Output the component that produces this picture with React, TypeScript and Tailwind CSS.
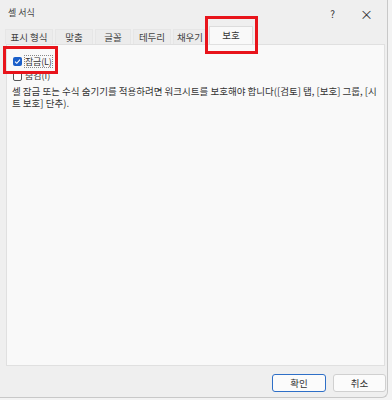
import React from "react";

const font = { fontFamily: '"Noto Sans CJK KR", "Noto Sans", sans-serif' };

function Tab({ label, w, selected }: { label: string; w: string; selected?: boolean }) {
  if (selected) {
    return (
      <div className={`${w} h-[18px] -mb-px relative z-10 flex items-center justify-center border border-b-0 border-[#dcdcdc] bg-[#f9f9f9] text-[9.5px] text-[#333]`}>
        {label}
      </div>
    );
  }
  return (
    <div className={`${w} h-[15px] mt-[3px] flex items-center justify-center border border-b-0 border-[#e6e6e6] bg-[#ececec] text-[9.5px] text-[#444]`}>
      {label}
    </div>
  );
}

export default function App() {
  return (
    <div className="w-[392px] h-[400px] bg-[#f3f3f3] relative overflow-hidden" style={font}>
      <div className="w-[388px] h-[398px] bg-[#efefef] border-r border-b border-[#c8c8c8] rounded-br-[6px] flex flex-col">
        {/* title */}
        <div className="h-[26px] flex items-center pl-[8px] pr-[14px] text-[9px] text-[#444]">
          <span>셀 서식</span>
          <span className="ml-auto mr-[25px] text-[10px] text-[#333]">?</span>
          <span className="text-[13px] text-[#333] leading-none">×</span>
        </div>
        {/* tabs */}
        <div className="flex pl-[5px] gap-[2px] h-[18px] items-start">
          <Tab label="표시 형식" w="w-[48px]" />
          <Tab label="맞춤" w="w-[38px]" />
          <Tab label="글꼴" w="w-[36px]" />
          <Tab label="테두리" w="w-[38px]" />
          <Tab label="채우기" w="w-[34px]" />
          <Tab label="보호" w="w-[44px]" selected />
        </div>
        {/* panel */}
        <div className="mx-[6px] w-[379px] h-[322px] bg-[#f9f9f9] border border-[#e0e0e0] pl-[5px] pr-[1px] pt-[9px] text-[9.5px] text-[#333]">
          <div className="flex items-center gap-[2px] h-[14px]">
            <div className="w-[9px] h-[9px] ml-[1px] rounded-[2px] bg-[#1b5fc9] flex items-center justify-center">
              <svg width="7" height="7" viewBox="0 0 7 7">
                <path d="M1 3.6 L2.8 5.3 L6 1.6" stroke="white" strokeWidth="1.1" fill="none" />
              </svg>
            </div>
            <span className="border border-dotted border-[#888] leading-[11px] text-[9px] tracking-[-0.2px]">잠금(L)</span>
          </div>
          <div className="flex items-center gap-[3px] h-[14px] mt-[1px]">
            <div className="w-[9px] h-[9px] ml-[1px] rounded-[2px] border border-[#555] bg-white" />
            <span className="text-[9px]">숨김(I)</span>
          </div>
          <p className="mt-[2px] leading-[12px] text-[9.5px] text-[#333]">
            셀 잠금 또는 수식 숨기기를 적용하려면 워크시트를 보호해야 합니다([검토] 탭, [보호] 그룹, [시트 보호] 단추).
          </p>
        </div>
        {/* buttons */}
        <div className="flex justify-end gap-[7px] pr-[1px] mt-[8px]">
          <button className="w-[54px] h-[18px] rounded-[3px] border border-[#2e6fc7] bg-[#fbfbfb] text-[9.5px] text-[#333]">확인</button>
          <button className="w-[53px] h-[18px] rounded-[3px] border border-[#d0d0d0] bg-[#fbfbfb] text-[9.5px] text-[#333]">취소</button>
        </div>
      </div>
      {/* red highlight boxes */}
      <div className="absolute left-[205px] top-[16px] w-[53px] h-[38px] border-[3px] border-[#e8141b]" />
      <div className="absolute left-[3px] top-[46px] w-[55px] h-[28px] border-[3px] border-[#e8141b]" />
    </div>
  );
}
